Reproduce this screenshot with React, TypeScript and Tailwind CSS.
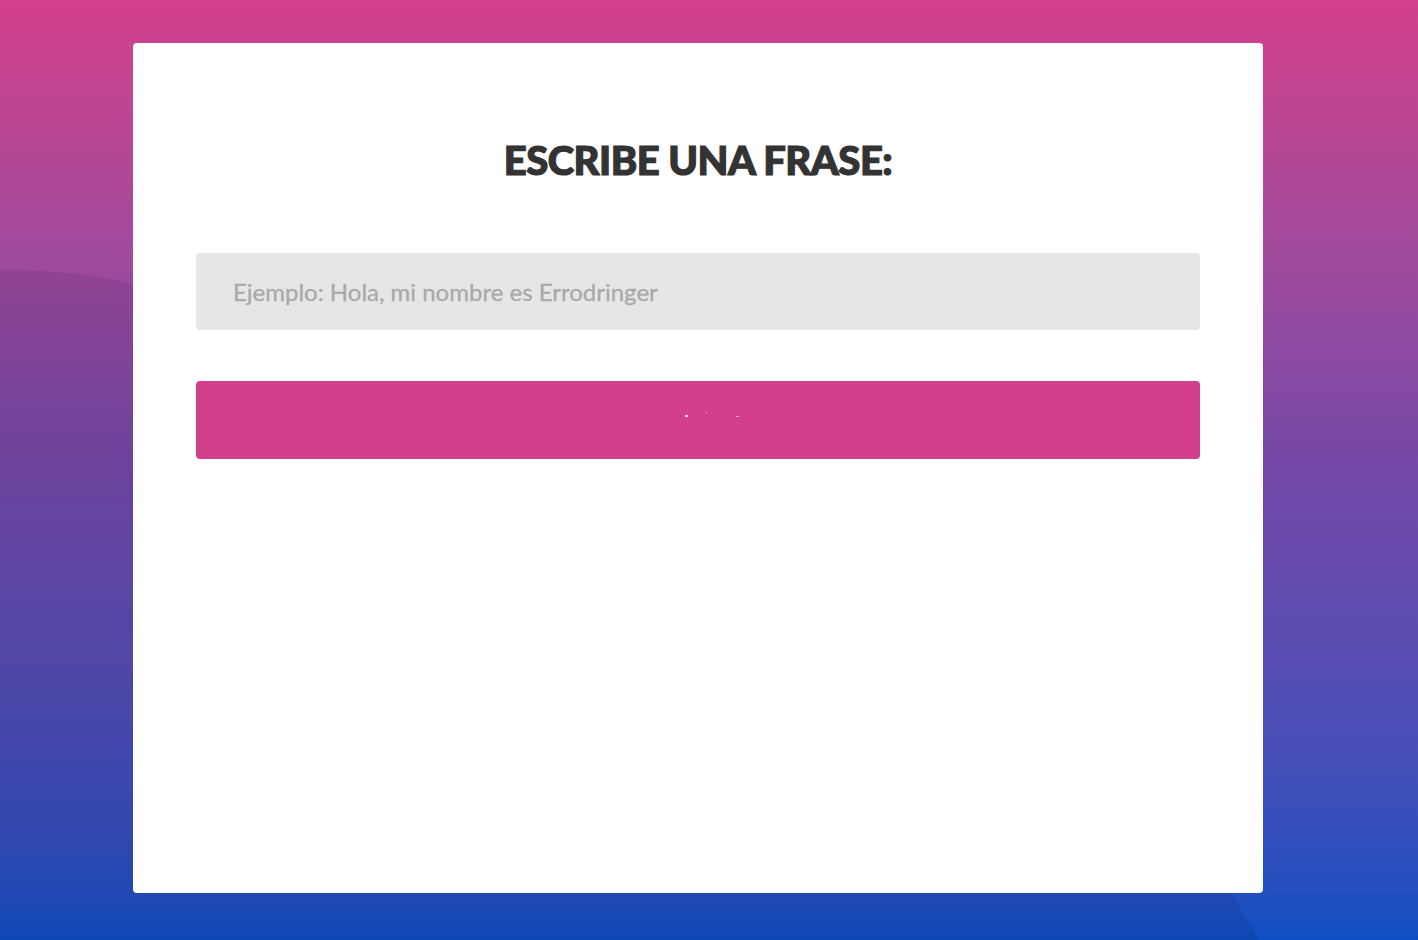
export default function App() {
  return (
    <div className="relative h-[940px] w-full overflow-hidden bg-linear-to-b from-[#d43f8b] via-[#7448a8] to-[#0a4fc2]">
      {/* background wave */}
      <svg
        className="absolute inset-0 h-full w-full"
        viewBox="0 0 1418 940"
        preserveAspectRatio="none"
      >
        <path
          d="M0,270 C60,270 100,276 140,286 C500,380 1000,560 1232,893 L1258,940 L0,940 Z"
          fill="rgba(20,10,60,0.09)"
        />
      </svg>

      <div className="relative pt-[43px] pl-[133px]">
        <div
          className="h-[850px] w-[1130px] rounded-[4px] bg-white px-[63px] pt-[95px]"
          style={{ fontFamily: "Lato, 'Open Sans', sans-serif" }}
        >
          <h1 className="text-center text-[40px] font-black leading-[44px] tracking-[-0.5px] text-[#333333] [-webkit-text-stroke:1.2px_#333333]">
            ESCRIBE UNA FRASE:
          </h1>

          <input
            type="text"
            placeholder="Ejemplo: Hola, mi nombre es Errodringer"
            className="mt-[71px] block h-[77px] w-full rounded-[4px] bg-[#e6e6e6] px-[37px] text-[24px] text-[#555] outline-none placeholder:text-[#a9a9a9] [-webkit-text-stroke:0.3px_#a9a9a9]"
          />

          <button className="relative mt-[51px] block h-[78px] w-full rounded-[4px] bg-[#d33f8b]">
            <span className="absolute left-[489px] top-[34px] h-[2px] w-[3px] bg-white/80" />
            <span className="absolute left-[510px] top-[31px] h-[2px] w-[1px] bg-white/40" />
            <span className="absolute left-[540px] top-[35px] h-[1px] w-[3px] bg-white/60" />
          </button>
        </div>
      </div>
    </div>
  );
}
